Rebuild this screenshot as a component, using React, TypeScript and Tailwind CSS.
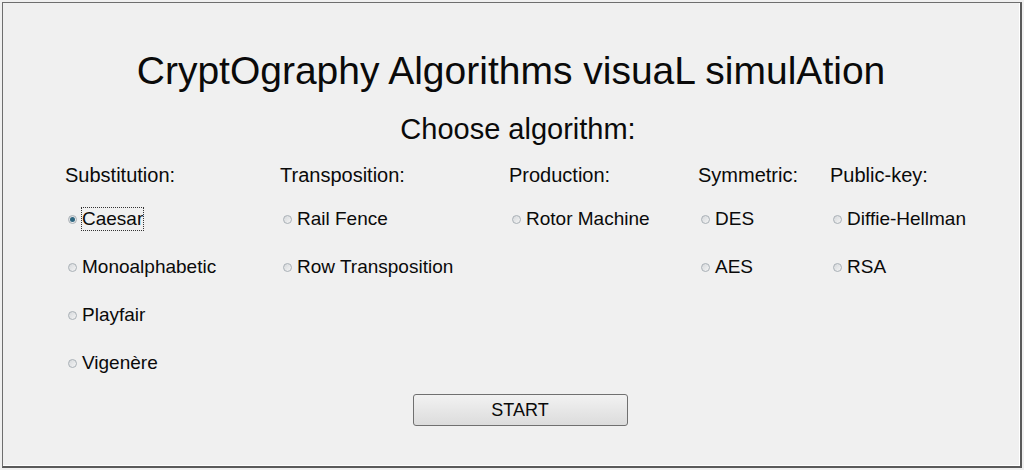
import React from "react";

type Col = { title: string; width: string; items: string[] };

const columns: Col[] = [
  { title: "Substitution:", width: "w-[215px]", items: ["Caesar", "Monoalphabetic", "Playfair", "Vigenère"] },
  { title: "Transposition:", width: "w-[229px]", items: ["Rail Fence", "Row Transposition"] },
  { title: "Production:", width: "w-[189px]", items: ["Rotor Machine"] },
  { title: "Symmetric:", width: "w-[132px]", items: ["DES", "AES"] },
  { title: "Public-key:", width: "w-[150px]", items: ["Diffie-Hellman", "RSA"] },
];

function Radio({ checked }: { checked: boolean }) {
  return (
    <span className="flex h-[9px] w-[9px] shrink-0 items-center justify-center rounded-full border border-[#a9b0b6] bg-gradient-to-br from-[#d6d9dc] to-[#f4f4f4]">
      {checked && <span className="h-[5px] w-[5px] rounded-full bg-[#2d6680]" />}
    </span>
  );
}

export default function App() {
  // 선택된 알고리즘 (기본값: Caesar)
  const selected = "Caesar";

  return (
    <div className="h-[470px] w-[1024px] bg-[#f0f0f0] p-[2px] font-['Liberation_Sans',Arial,sans-serif] text-[#0a0a0a]">
      <div className="flex h-[466px] flex-col border-t border-l border-[#6e6e6e] border-r-2 border-b-2 border-r-[#5a5a5a] border-b-[#5a5a5a]">
        <div className="flex h-full flex-col border-r border-b border-white">
          <h1 className="mt-[46px] text-center text-[39px] leading-[44px]">
            CryptOgraphy Algorithms visuaL simulAtion
          </h1>
          <h2 className="mt-[21px] pl-[14px] text-center text-[29px] leading-[30px]">Choose algorithm:</h2>
          <div className="mt-[19px] flex pl-[62px]">
            {columns.map((col) => (
              <div key={col.title} className={`${col.width} flex flex-col`}>
                <div className="h-[24px] text-[20px] leading-[24px]">{col.title}</div>
                <div className="mt-[20px] flex flex-col gap-[24px]">
                  {col.items.map((item) => (
                    <label key={item} className="flex h-[24px] items-center pl-[3px]">
                      <Radio checked={item === selected} />
                      <span
                        className={`ml-[4px] text-[19px] leading-[22px] ${
                          item === selected ? "border border-dotted border-[#333]" : "border border-transparent"
                        }`}
                      >
                        {item}
                      </span>
                    </label>
                  ))}
                </div>
              </div>
            ))}
          </div>
          <div className="mt-[19px] flex justify-center pl-[18px]">
            <button className="h-[32px] w-[215px] rounded-[3px] border border-[#707070] bg-gradient-to-b from-[#f2f2f2] to-[#dcdcdc] text-[18px] leading-[30px]">
              START
            </button>
          </div>
        </div>
      </div>
    </div>
  );
}
